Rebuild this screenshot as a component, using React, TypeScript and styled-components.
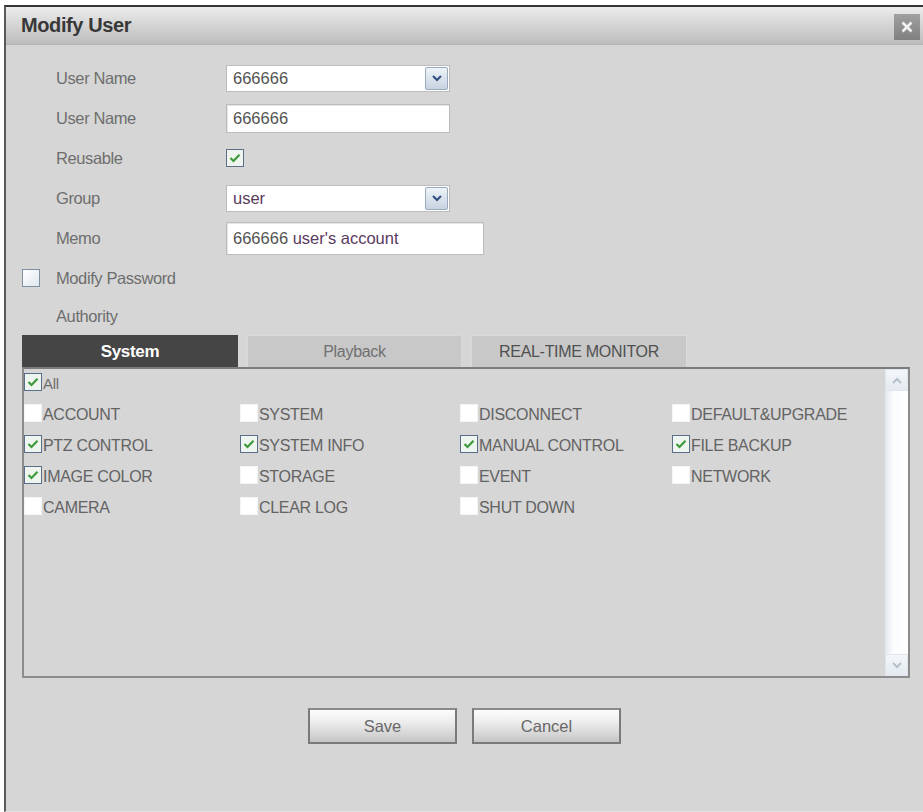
import React from "react";
import styled, {createGlobalStyle} from "styled-components";

type Permission = {
    label: string;
    checked?: boolean;
};

const permissions: Permission[] = [
    {label: "ACCOUNT"},
    {label: "SYSTEM"},
    {label: "DISCONNECT"},
    {label: "DEFAULT&UPGRADE"},
    {label: "PTZ CONTROL", checked: true},
    {label: "SYSTEM INFO", checked: true},
    {label: "MANUAL CONTROL", checked: true},
    {label: "FILE BACKUP", checked: true},
    {label: "IMAGE COLOR", checked: true},
    {label: "STORAGE"},
    {label: "EVENT"},
    {label: "NETWORK"},
    {label: "CAMERA"},
    {label: "CLEAR LOG"},
    {label: "SHUT DOWN"},
];

const tabs = [
    {label: "System", color: "#ffffff"},
    {label: "Playback", color: "#707070"},
    {label: "REAL-TIME MONITOR", color: "#505050"},
];

const Tick = () => (
    <svg width="12" height="10" viewBox="0 0 12 10">
        <polyline points="1.5,5 4.5,8 10.5,1.8" fill="none" stroke="#3c9a3c" strokeWidth="2.2"/>
    </svg>
);

const Chevron: React.FC<{up?: boolean; color?: string}> = ({up, color = "#2f4f7f"}) => (
    <svg width="10" height="7" viewBox="0 0 10 7">
        <polyline
            points={up ? "1,6 5,2 9,6" : "1,1 5,5 9,1"}
            fill="none"
            stroke={color}
            strokeWidth="2"
        />
    </svg>
);

const SelectBox: React.FC<{value: string; tone?: string}> = ({value, tone}) => (
    <Select>
        <FieldText $tone={tone}>{value}</FieldText>
        <DropButton>
            <Chevron/>
        </DropButton>
    </Select>
);

const PermissionItem: React.FC<Permission & {small?: boolean}> = ({label, checked, small}) => (
    <Item>
        <Box $checked={!!checked}>{checked && <Tick/>}</Box>
        <ItemText $small={small}>{label}</ItemText>
    </Item>
);

const App: React.FC = () => {

    // =======================================================================================================
    // Render
    // =======================================================================================================

    return (
        <Page>
            <GlobalStyle/>
            <Dialog>
                <TitleBar>
                    <Title>Modify User</Title>
                    <CloseButton>
                        <svg width="12" height="12" viewBox="0 0 12 12">
                            <path d="M1.5 1.5 L10.5 10.5 M10.5 1.5 L1.5 10.5" stroke="#f2f2f2" strokeWidth="2.6"/>
                        </svg>
                    </CloseButton>
                </TitleBar>

                <Form>
                    <Row>
                        <Label>User Name</Label>
                        <SelectBox value="666666"/>
                    </Row>
                    <Row>
                        <Label>User Name</Label>
                        <Input $width={224} $height={29}>
                            <FieldText>666666</FieldText>
                        </Input>
                    </Row>
                    <Row>
                        <Label>Reusable</Label>
                        <FormCheck $checked><Tick/></FormCheck>
                    </Row>
                    <Row>
                        <Label>Group</Label>
                        <SelectBox value="user" tone="#553a5a"/>
                    </Row>
                    <Row>
                        <Label>Memo</Label>
                        <Input $width={258} $height={33}>
                            <FieldText>666666 <Purple>user's account</Purple></FieldText>
                        </Input>
                    </Row>
                    <PasswordRow>
                        <FormCheck $checked={false}/>
                        <PasswordLabel>Modify Password</PasswordLabel>
                    </PasswordRow>
                    <AuthorityRow>
                        <Label>Authority</Label>
                    </AuthorityRow>
                </Form>

                <TabBar>
                    {tabs.map((tab, i) => (
                        <Tab key={tab.label} $active={i === 0} $color={tab.color} $width={i === 1 ? 215 : 216}>
                            {tab.label}
                        </Tab>
                    ))}
                </TabBar>

                <Panel>
                    <List>
                        <AllRow>
                            <PermissionItem label="All" checked small/>
                        </AllRow>
                        <Grid>
                            {permissions.map(p => (
                                <PermissionItem key={p.label} {...p}/>
                            ))}
                        </Grid>
                    </List>
                    <Scrollbar>
                        <ScrollArrow><Chevron up color="#b4c0cc"/></ScrollArrow>
                        <ScrollArrow><Chevron color="#b4c0cc"/></ScrollArrow>
                    </Scrollbar>
                </Panel>

                <Buttons>
                    <Button>Save</Button>
                    <Button>Cancel</Button>
                </Buttons>
            </Dialog>
        </Page>
    );
}

export default App;

const GlobalStyle = createGlobalStyle`
  html, body {
    margin: 0;
    padding: 0;
    background: #ffffff;
  }

  body {
    font-family: "Liberation Sans", Arial, sans-serif;
    overflow: hidden;
  }
`;

const Page = styled.div`
  padding: 5px 0 0 4px;
  width: 919px;
`;

const Dialog = styled.div`
  display: flex;
  flex-direction: column;
  box-sizing: border-box;
  height: 807px;
  border-left: 2px solid #5a5a5a;
  border-top: 2px solid #343434;
  border-bottom: 1px solid #e2e2e2;
  background: #d6d6d6;
`;

const TitleBar = styled.div`
  display: flex;
  align-items: center;
  justify-content: space-between;
  height: 37px;
  padding: 0 3px 0 15px;
  background: linear-gradient(#ececec, #d6d6d6 45%, #bdbdbd);
  border-bottom: 1px solid #b4b4b4;
`;

const Title = styled.div`
  font-size: 20px;
  font-weight: bold;
  color: #383838;
  letter-spacing: -0.4px;
`;

const CloseButton = styled.div`
  display: flex;
  align-items: center;
  justify-content: center;
  width: 26px;
  height: 26px;
  margin-top: 3px;
  background: linear-gradient(#a0a0a0, #808080);
`;

const Form = styled.div`
  padding-top: 13px;
`;

const Row = styled.div`
  display: flex;
  align-items: center;
  height: 40px;
  padding-left: 50px;
`;

const Label = styled.div`
  width: 170px;
  font-size: 16.5px;
  color: #6e6e6e;
  letter-spacing: -0.4px;
`;

const Select = styled.div`
  display: flex;
  align-items: stretch;
  box-sizing: border-box;
  width: 224px;
  height: 27px;
  background: #ffffff;
  border: 1px solid #bcbcbc;
`;

const Input = styled.div<{ $width: number; $height: number }>`
  display: flex;
  align-items: center;
  box-sizing: border-box;
  width: ${p => p.$width}px;
  height: ${p => p.$height}px;
  background: #ffffff;
  border: 1px solid #bcbcbc;
  box-shadow: inset 1px 1px 0 #e6e6e6;
`;

const FieldText = styled.div<{ $tone?: string }>`
  flex: 1;
  display: flex;
  align-items: center;
  padding-left: 6px;
  font-size: 16.5px;
  color: ${p => p.$tone || "#525252"};
  white-space: pre;
`;

const Purple = styled.span`
  color: #5a3a60;
`;

const DropButton = styled.div`
  display: flex;
  align-items: center;
  justify-content: center;
  width: 21px;
  margin: 1px;
  border: 1px solid #9aaabd;
  border-radius: 2px;
  background: linear-gradient(#eef3f8, #c6d3e0);
`;

const FormCheck = styled.div<{ $checked: boolean }>`
  display: flex;
  align-items: center;
  justify-content: center;
  box-sizing: border-box;
  width: 18px;
  height: 18px;
  border: 1px solid ${p => p.$checked ? "#5d6f88" : "#7f8fa2"};
  background: ${p => p.$checked ? "#eef5ee" : "linear-gradient(135deg, #ffffff, #dfe7ef)"};
`;

const PasswordRow = styled.div`
  display: flex;
  align-items: center;
  height: 40px;
  padding-left: 16px;
`;

const PasswordLabel = styled(Label)`
  margin-left: 16px;
`;

const AuthorityRow = styled(Row)`
  height: 37px;
`;

const TabBar = styled.div`
  display: flex;
  gap: 9px;
  height: 32px;
  margin-left: 16px;
`;

const Tab = styled.div<{ $active: boolean; $width: number; $color: string }>`
  display: flex;
  align-items: center;
  justify-content: center;
  box-sizing: border-box;
  width: ${p => p.$width}px;
  background: ${p => p.$active ? "#454545" : "#c8c8c8"};
  border: 1px solid ${p => p.$active ? "#454545" : "#dadada"};
  border-bottom: none;
  color: ${p => p.$color};
  font-size: ${p => p.$active ? "17px" : "16px"};
  font-weight: ${p => p.$active ? "bold" : "normal"};
  letter-spacing: -0.3px;
`;

const Panel = styled.div`
  display: flex;
  box-sizing: border-box;
  width: 888px;
  height: 311px;
  margin-left: 16px;
  border: 2px solid #8c8c8c;
  border-top-color: #7c7c7c;
`;

const List = styled.div`
  flex: 1;
  display: flex;
  flex-direction: column;
`;

const AllRow = styled.div`
  display: flex;
  align-items: center;
  height: 28px;
`;

const Grid = styled.div`
  display: grid;
  grid-template-columns: 216px 220px 212px 1fr;
  grid-auto-rows: 31px;
  margin-top: 2px;
`;

const Item = styled.div`
  display: flex;
  align-items: center;
  gap: 1px;
`;

const Box = styled.div<{ $checked: boolean }>`
  display: flex;
  align-items: center;
  justify-content: center;
  box-sizing: border-box;
  width: 18px;
  height: 18px;
  margin-top: -3px;
  background: ${p => p.$checked ? "#eef5ee" : "#ffffff"};
  border: 1px solid ${p => p.$checked ? "#5a6e8c" : "#f4f4f4"};
`;

const ItemText = styled.span<{ $small?: boolean }>`
  font-size: ${p => p.$small ? "15px" : "16px"};
  color: ${p => p.$small ? "#707070" : "#636363"};
  letter-spacing: -0.3px;
`;

const Scrollbar = styled.div`
  display: flex;
  flex-direction: column;
  justify-content: space-between;
  width: 23px;
  background: linear-gradient(to right, #e2e8ee, #fafcfe 35%, #ffffff);
`;

const ScrollArrow = styled.div`
  display: flex;
  align-items: center;
  justify-content: center;
  height: 20px;
  background: linear-gradient(#f4f7fa, #e4eaf0);
  border: 1px solid #e0e6ec;
`;

const Buttons = styled.div`
  display: flex;
  justify-content: center;
  gap: 15px;
  margin-top: 30px;
`;

const Button = styled.div`
  display: flex;
  align-items: center;
  justify-content: center;
  box-sizing: border-box;
  width: 149px;
  height: 36px;
  border: 2px solid #7a7a7a;
  border-top-color: #8a8a8a;
  background: linear-gradient(#fdfdfd, #ececec 40%, #c6c6c6);
  font-size: 16.5px;
  color: #686868;
`;
